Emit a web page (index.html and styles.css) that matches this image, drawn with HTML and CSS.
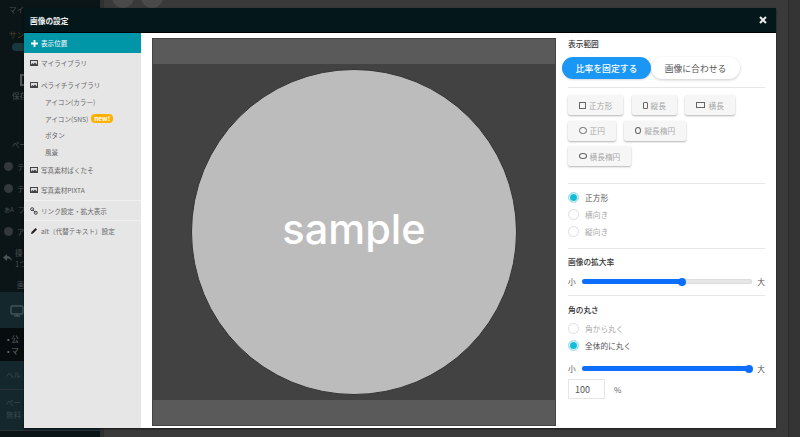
FILE: index.html
```html
<!DOCTYPE html>
<html lang="ja">
<head>
<meta charset="utf-8">
<title>画像の設定</title>
<link rel="stylesheet" href="styles.css">
</head>
<body>
<div class="page">
  <aside class="bg-side">
    <div class="bg-top">マイ</div>
    <div class="bg-sample">サンプ</div>
    <div class="bg-pill"></div>
    <div class="bg-save">
      <svg width="8" height="12" viewBox="0 0 8 12"><path d="M1 1h5l1 1v9H1z" fill="none" stroke="#4d5355" stroke-width="2"/></svg>
      <span>保存</span>
    </div>
    <div class="bg-page">ペー</div>
    <div class="bg-row"><i class="bg-dot"></i>テ</div>
    <div class="bg-row"><i class="bg-dot"></i>テ</div>
    <div class="bg-row"><span class="bg-a">あA</span>フ</div>
    <div class="bg-row"><i class="bg-dot"></i>ア</div>
    <div class="bg-undo">
      <svg width="9" height="8" viewBox="0 0 9 8"><path d="M4 0L0 3.500 4 7V4.500c2 0 3.500.5 5 2.500-.5-3-2.500-5-5-5z" fill="#4d5355"/></svg>
      <span>操<br>1つ</span>
    </div>
    <div class="bg-img">画</div>
    <div class="bg-device">
      <svg width="14" height="12" viewBox="0 0 14 12"><rect x="1" y="1" width="12" height="8" rx="1" fill="none" stroke="#3f5357" stroke-width="1.500"/><path d="M4 11h6M7 9v2" stroke="#3f5357" stroke-width="1.500"/></svg>
    </div>
    <div class="bg-list"><div>• 公</div><div>• マ</div></div>
    <div class="bg-help">ヘル</div>
    <div class="bg-free">ペー<br>無料</div>
  </aside>
  <main class="bg-main">
    <div class="bg-tools"><i class="bg-tool"></i><i class="bg-tool"></i></div>
  </main>
  <div class="bg-strip"></div>
</div>

<section class="modal">
  <header class="modal-head">
    <h1>画像の設定</h1>
    <svg class="close" width="8" height="8" viewBox="0 0 8 8"><path d="M1 1l6 6M7 1L1 7" stroke="#e8e8e8" stroke-width="2"/></svg>
  </header>
  <div class="modal-body">
    <nav class="menu">
      <div class="menu-active"><svg width="7" height="7" viewBox="0 0 7 7"><path d="M3.500 0v7M0 3.500h7" stroke="#fff" stroke-width="1.800"/></svg>表示位置</div>
      <div class="menu-item"><svg class="pic" viewBox="0 0 8 6"><path d="M0 0h8v6H0z" fill="#444"/><path d="M1 1h6v3.500L5 2.500 3.500 4 2.500 3 1 4.500z" fill="#ddd"/></svg>マイライブラリ</div>
      <div class="menu-item second"><svg class="pic" viewBox="0 0 8 6"><path d="M0 0h8v6H0z" fill="#444"/><path d="M1 1h6v3.500L5 2.500 3.500 4 2.500 3 1 4.500z" fill="#ddd"/></svg>ペライチライブラリ</div>
      <div class="sub">アイコン(カラー)</div>
      <div class="sub">アイコン(SNS)<span class="new">new!</span></div>
      <div class="sub">ボタン</div>
      <div class="sub">風景</div>
      <div class="menu-item"><svg class="pic" viewBox="0 0 8 6"><path d="M0 0h8v6H0z" fill="#444"/><path d="M1 1h6v3.500L5 2.500 3.500 4 2.500 3 1 4.500z" fill="#ddd"/></svg>写真素材ぱくたそ</div>
      <div class="menu-item"><svg class="pic" viewBox="0 0 8 6"><path d="M0 0h8v6H0z" fill="#444"/><path d="M1 1h6v3.500L5 2.500 3.500 4 2.500 3 1 4.500z" fill="#ddd"/></svg>写真素材PIXTA</div>
      <div class="menu-line"><svg class="pic-tall" viewBox="0 0 8 8"><path d="M2.500 2.500l3 3" stroke="#444" stroke-width="1"/><circle cx="2.200" cy="2.200" r="1.500" fill="none" stroke="#444"/><circle cx="5.800" cy="5.800" r="1.500" fill="none" stroke="#444"/></svg>リンク設定・拡大表示</div>
      <div class="menu-line"><svg class="pic-tall" viewBox="0 0 8 8"><path d="M1 7l.5-2L5.500 1l1.500 1.500-4 4z" fill="#222"/></svg>alt（代替テキスト）設定</div>
    </nav>
    <div class="stage">
      <div class="photo-frame">
        <div class="band"></div>
        <div class="dark">
          <div class="circle">sample</div>
        </div>
        <div class="band"></div>
      </div>
    </div>
    <div class="panel">
      <h2>表示範囲</h2>
      <div class="toggle">
        <span class="tog on">比率を固定する</span>
        <span class="tog off">画像に合わせる</span>
      </div>
      <hr class="rule r1">
      <div class="shapes">
        <span class="shape"><i class="ic sq"></i>正方形</span>
        <span class="shape"><i class="ic tall"></i>縦長</span>
        <span class="shape"><i class="ic wide"></i>横長</span>
        <span class="shape"><i class="ic circ"></i>正円</span>
        <span class="shape"><i class="ic tallo"></i>縦長楕円</span>
        <span class="shape"><i class="ic wideo"></i>横長楕円</span>
      </div>
      <hr class="rule r2">
      <label class="radio on first"><i></i>正方形</label>
      <label class="radio"><i></i>横向き</label>
      <label class="radio"><i></i>縦向き</label>
      <hr class="rule r3">
      <h2>画像の拡大率</h2>
      <div class="slider"><span>小</span><div class="track"><div class="fill w60"></div></div><span>大</span></div>
      <hr class="rule r4">
      <h2>角の丸さ</h2>
      <div class="radios2">
        <label class="radio"><i></i>角から丸く</label>
        <label class="radio on"><i></i>全体的に丸く</label>
      </div>
      <div class="slider s2"><span>小</span><div class="track"><div class="fill w100"></div></div><span>大</span></div>
      <div class="num"><span class="box">100</span><span class="pct">%</span></div>
    </div>
  </div>
</section>
</body>
</html>
```
FILE: styles.css
```css
* { box-sizing: border-box; }
html, body { margin: 0; height: 100%; overflow: hidden; }
body {
  font-family: "Noto Sans CJK JP", "Liberation Sans", sans-serif;
  background: #383838;
}
.page { display: flex; height: 437px; }

/* dimmed page behind the dialog */
.bg-side {
  width: 100px;
  background: #0b1416;
  color: #4a5052;
  font-size: 7.500px;
  line-height: 11px;
  padding-top: 4px;
}
.bg-top { padding-left: 9px; height: 24px; }
.bg-sample { padding-left: 9px; height: 13px; padding-top: 1px; color: #4f4b20; }
.bg-pill { margin: 2px 0 23px 12px; width: 14px; height: 8px; border-radius: 4px; background: #17393d; }
.bg-save { display: flex; flex-direction: column; align-items: flex-start; padding-left: 12px; gap: 4px; }
.bg-save svg { margin-left: 8px; }
.bg-page { margin-top: 38px; padding-left: 12px; height: 17px; }
.bg-row { height: 21.500px; padding-left: 4px; display: flex; align-items: center; gap: 4px; }
.bg-dot { width: 9px; height: 9px; border-radius: 50%; background: #33383a; flex: none; }
.bg-a { font-size: 6px; }
.bg-undo { height: 30px; margin-top: 1px; padding-left: 3px; display: flex; align-items: center; gap: 3px; }
.bg-img { height: 19px; padding: 6px 0 0 17px; }
.bg-device { background: #13272d; height: 36px; padding: 13px 0 0 10px; }
.bg-list { background: #070d0e; height: 33px; padding: 5px 0 0 7px; color: #6d7274; line-height: 12px; }
.bg-help { background: #13272d; height: 29px; padding: 8px 0 0 6px; border-bottom: 1px solid #2a3336; color: #39494d; }
.bg-free { background: #13272d; height: 41px; padding: 7px 0 0 6px; line-height: 12px; border-bottom: 1px solid #2a3336; color: #39494d; }
.bg-main { flex: 1; background: #3a3a3a; border-left: 4px solid #303030; }
.bg-tools { display: flex; gap: 7px; padding-left: 8px; margin-top: -14px; }
.bg-tool { width: 22px; height: 22px; border-radius: 50%; background: #4a4a4a; }
.bg-strip { width: 12px; background: #343434; border-left: 1px solid #2c2c2c; }

/* dialog */
.modal {
  position: absolute;
  left: 24px; top: 8px;
  width: 752px; height: 420px;
  background: #fff;
  display: flex;
  flex-direction: column;
  box-shadow: 0 1px 2px rgba(0,0,0,.6);
}
.modal-head {
  height: 25px;
  background: #04181c;
  border-bottom: 1px solid #000;
  display: flex;
  align-items: center;
  justify-content: space-between;
  padding: 0 9px 0 6px;
  color: #f0f0f0;
  flex: none;
}
.modal-head h1 { margin: 0; font-size: 7.700px; font-weight: 700; }
.modal-body { flex: 1; display: flex; min-height: 0; }

.menu { width: 117px; background: #e6e6e6; color: #666; font-size: 6.600px; flex: none; }
.menu .pic { width: 8px; height: 6px; flex: none; }
.menu .pic-tall { width: 8px; height: 8px; flex: none; }
.menu-active {
  height: 20px;
  background: #0195a8;
  color: #e4f4f6;
  font-weight: 500;
  display: flex;
  align-items: center;
  gap: 3px;
  padding-left: 7px;
}
.menu-item { display: flex; align-items: center; gap: 3px; padding-left: 6px; height: 20px; }
.menu-item.second { margin: 2px 0 -1px; }
.sub { height: 16.500px; padding-left: 21px; display: flex; align-items: center; }
.new {
  background: #ffb000;
  color: #fff;
  font-size: 6.500px;
  font-weight: 700;
  border-radius: 4px;
  padding: 0 3px;
  height: 9px;
  line-height: 8px;
  margin-left: 3px;
}
.menu-line {
  height: 20px;
  display: flex; align-items: center; gap: 3px;
  padding-left: 6px;
  border-top: 1px solid #f0f0f0;
}

.stage { width: 415px; flex: none; padding: 5px 0 0 11px; }
.photo-frame {
  width: 404px; height: 388px;
  display: flex; flex-direction: column;
  border: 1px solid #444;
  background: #424242;
}
.band { height: 25px; background: #5a5a5a; flex: none; }
.dark { flex: 1; display: flex; justify-content: center; align-items: center; background: #424242; }
.circle {
  width: 326px; height: 326px;
  border-radius: 50%;
  background: #bcbcbc;
  border: 1px solid #333;
  color: #fff;
  font-family: "Inter", "Liberation Sans", sans-serif;
  font-size: 41.500px;
  font-weight: 500;
  padding-bottom: 7px;
  display: flex; align-items: center; justify-content: center;
}

.panel { flex: 1; padding: 5px 11px 0 12px; min-width: 0; color: #444; font-size: 7.700px; }
.panel h2 { margin: 0; font-size: 7.700px; font-weight: 500; color: #333; line-height: 12px; }
.toggle { display: flex; margin: 7px 0 0 -6px; }
.tog {
  height: 22px; border-radius: 11px;
  display: flex; align-items: center; justify-content: center;
  font-size: 8.800px;
  flex: none;
}
.tog.on { width: 89px; background: #1a96f4; color: #fff; font-weight: 500; box-shadow: 0 1px 2px rgba(0,0,0,.15); z-index: 1; }
.tog.off { width: 89px; background: #fff; color: #555; box-shadow: 0 1px 3px rgba(0,0,0,.2); }

.rule { border: 0; border-top: 1px solid #e6e6e6; margin: 0; height: 0; }
.r1 { margin-top: 8px; }
.r2 { margin-top: 17px; }
.r3 { margin: 8px 0 7px; }
.r4 { margin: 8px 0 8px; }

.shapes { display: flex; flex-wrap: wrap; gap: 5.500px 8.500px; margin-top: 7px; width: 185px; }
.shape {
  height: 20px;
  padding: 0 11px;
  display: flex; align-items: center; justify-content: center; gap: 3px;
  background: #f6f6f6;
  border-radius: 2px;
  color: #a8a8a8;
  font-size: 7.700px;
  box-shadow: 0 1px 2px rgba(0,0,0,.3);
}
.ic { display: block; border: 1px solid #666; flex: none; }
.sq { width: 7px; height: 7px; }
.tall { width: 5px; height: 7px; border-radius: 1px; }
.wide { width: 9px; height: 6px; }
.circ { width: 7.500px; height: 7.500px; border-radius: 50%; }
.tallo { width: 6px; height: 7.500px; border-radius: 50%; }
.wideo { width: 7.500px; height: 5.500px; border-radius: 50%; }

.radio { display: flex; align-items: center; gap: 6px; height: 17px; color: #aaa; font-size: 7.700px; }
.radio i { width: 11px; height: 11px; border-radius: 50%; border: 1px solid #ddd; background: #fff; flex: none; }
.radio.on { color: #555; }
.radio.on i { background: #14bcd8; border-color: #a8e4ee; box-shadow: inset 0 0 0 1px #fff; }
.radio.first { margin-top: 5px; }
.radios2 { margin-top: 4px; }

.slider { display: flex; align-items: center; margin-top: 8px; justify-content: space-between; color: #555; }
.track { width: 170px; height: 5px; border-radius: 3px; background: #e6e6e6; box-shadow: inset 0 0 0 1px #ddd; }
.fill { height: 5px; border-radius: 3px; background: #0d6efd; position: relative; }
.fill::after {
  content: ""; position: absolute; right: -1px; top: -1.500px;
  width: 8px; height: 8px; border-radius: 50%; background: #0d6efd;
}
.w60 { width: 61%; }
.w100 { width: 100%; }
.s2 { margin-top: 9px; }
.num { display: flex; align-items: center; margin-top: 5px; gap: 9px; }
.box { width: 37px; height: 20px; border: 1px solid #e6e6e6; display: flex; align-items: center; padding-left: 6px; font-size: 9px; color: #555; }
.pct { font-size: 8px; color: #666; }
```
